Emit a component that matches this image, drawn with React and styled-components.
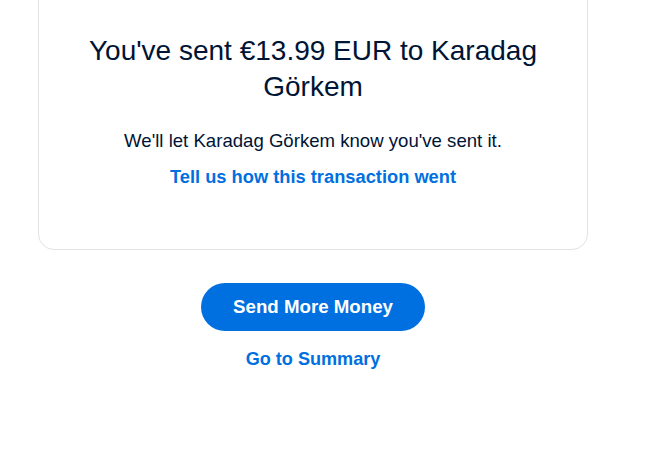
import React from "react";
import styled, { createGlobalStyle } from "styled-components";

const GlobalStyle = createGlobalStyle`
  html, body {
    margin: 0;
    padding: 0;
    background: #ffffff;
    overflow: hidden;
  }
  body {
    font-family: "Liberation Sans", Arial, sans-serif;
    color: #001435;
  }
`;

const Page = styled.div`
  width: 650px;
  height: 455px;
  display: flex;
  flex-direction: column;
  align-items: flex-start;
`;

const Column = styled.div`
  margin-left: 38px;
  width: 550px;
  display: flex;
  flex-direction: column;
  align-items: center;
`;

const Card = styled.div`
  box-sizing: border-box;
  width: 550px;
  margin-top: -20px;
  height: 270px;
  padding: 52px 40px 0;
  border: 1px solid #e3e3e3;
  border-radius: 16px;
  display: flex;
  flex-direction: column;
  align-items: center;
  text-align: center;
`;

const Title = styled.h1`
  margin: 0;
  width: 470px;
  font-size: 28px;
  line-height: 36px;
  font-weight: 400;
  color: #001435;
`;

const Note = styled.p`
  margin: 24px 0 0;
  font-size: 18.6px;
  line-height: 24px;
  color: #001435;
  white-space: nowrap;
`;

const Link = styled.a`
  display: block;
  margin-top: ${(p) => p.gap || "0"};
  font-size: ${(p) => p.size || "18px"};
  line-height: 24px;
  font-weight: 700;
  color: #0070e0;
  text-decoration: none;
  white-space: nowrap;
  cursor: pointer;
`;

const PrimaryButton = styled.button`
  margin-top: 33px;
  width: 224px;
  height: 48px;
  border: none;
  border-radius: 24px;
  background: #0070e0;
  color: #ffffff;
  font-family: "Liberation Sans", Arial, sans-serif;
  font-size: 18.7px;
  font-weight: 700;
  cursor: pointer;
`;

export default function App() {
  return (
    <Page>
      <GlobalStyle />
      <Column>
        <Card>
          <Title>You've sent €13.99 EUR to Karadag Görkem</Title>
          <Note>We'll let Karadag Görkem know you've sent it.</Note>
          <Link gap="12px" size="18.3px">Tell us how this transaction went</Link>
        </Card>
        <PrimaryButton>Send More Money</PrimaryButton>
        <Link gap="16px" size="18.1px">Go to Summary</Link>
      </Column>
    </Page>
  );
}
